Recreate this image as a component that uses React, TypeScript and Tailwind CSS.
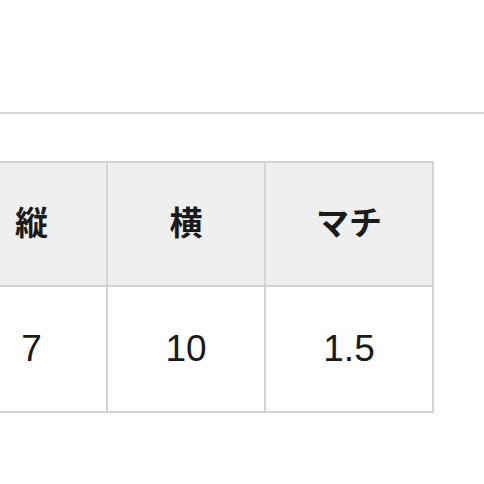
import React from "react";

export default function App() {
  const font = { fontFamily: '"Liberation Sans", "Noto Sans CJK JP", sans-serif' };
  return (
    <div className="w-[484px] h-[484px] bg-white overflow-hidden" style={font}>
      <div className="h-[112px]" />
      <div className="h-[2px] bg-[#d6d6d6]" />
      <div className="mt-[47px] ml-[-45px]">
        <table className="border-collapse table-fixed w-[477px] text-[#1a1a1a]">
          <colgroup>
            <col className="w-[151px]" />
            <col className="w-[158px]" />
            <col className="w-[168px]" />
          </colgroup>
          <thead>
            <tr className="h-[124px] bg-[#efefef]">
              <th className="border-2 border-[#d4d4d4] text-[33px] font-bold text-center p-0">縦</th>
              <th className="border-2 border-[#d4d4d4] text-[33px] font-bold text-center p-0">横</th>
              <th className="border-2 border-[#d4d4d4] text-[33px] font-bold text-center p-0">マチ</th>
            </tr>
          </thead>
          <tbody>
            <tr className="h-[126px] bg-white">
              <td className="border-2 border-[#d4d4d4] text-[37px] text-center p-0">7</td>
              <td className="border-2 border-[#d4d4d4] text-[37px] text-center p-0">10</td>
              <td className="border-2 border-[#d4d4d4] text-[37px] text-center p-0">1.5</td>
            </tr>
          </tbody>
        </table>
      </div>
    </div>
  );
}
